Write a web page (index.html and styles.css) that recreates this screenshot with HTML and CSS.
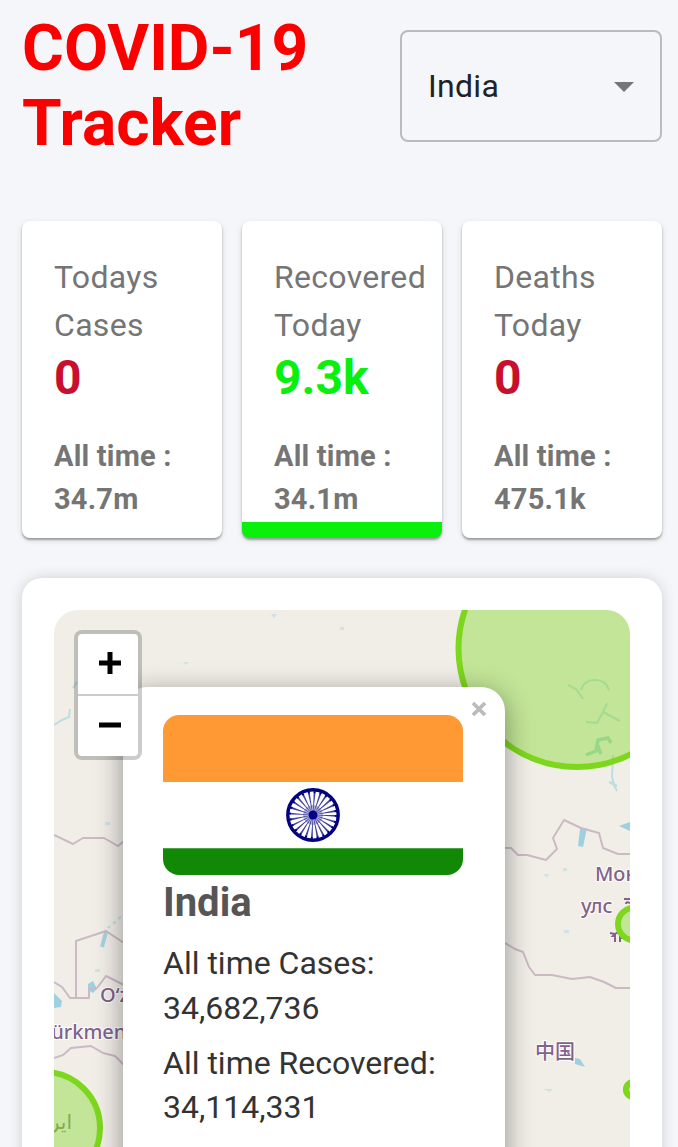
FILE: index.html
```html
<!DOCTYPE html>
<html lang="en">
<head>
<meta charset="utf-8">
<title>COVID-19 Tracker</title>
<link rel="stylesheet" href="styles.css">
</head>
<body>
<main class="app">
  <header class="header">
    <h1 class="title">COVID-19 Tracker</h1>
    <div class="select">
      <span>India</span>
      <svg class="arrow" width="20" height="10" viewBox="0 0 20 10"><path d="M0 0h20L10 10z"/></svg>
    </div>
  </header>

  <section class="stats">
    <article class="card">
      <p class="label">Todays Cases</p>
      <h2 class="value">0</h2>
      <p class="total">All time : 34.7m</p>
    </article>
    <article class="card card-selected">
      <p class="label">Recovered Today</p>
      <h2 class="value value-green">9.3k</h2>
      <p class="total">All time : 34.1m</p>
    </article>
    <article class="card">
      <p class="label">Deaths Today</p>
      <h2 class="value">0</h2>
      <p class="total">All time : 475.1k</p>
    </article>
  </section>

  <section class="map-card">
    <div class="map">
      <svg class="tiles" width="576" height="537" viewBox="54 610 576 537">
        <g class="water-line">
          <path d="M54 725l8-5 7-3 1-8M73 688l4-6"/>
          <path d="M568 685l8 4 7 10M581 690q3-10 14-10t14 10M607 703l-4 9 17 9M603 712l-6 11-11-1"/>
          <path class="lake" d="M586 755l10-4 2-11 10-2 3 5M597 744l4 10"/>
          <path d="M613 755l-1 22 3 11M612 781l5 10M609 782l8 4"/>
          <path class="river" d="M106 932l-4 15"/>
          <path class="dashed" d="M108 928l16-14"/>
        </g>
        <g class="water">
          <path d="M54 993l8 8-1 6-7 1zM88 984l5-3 4 8-4 4-5-3zM580 829l7-1-4 19-5-1zM619 826l11-4v9zM575 1058l5 1 5 8-10-3z"/>
          <path class="faint" d="M543 1089h10l-3 3zM564 930h5v3h-5zM271 614h6l-3 4zM183 662h6l-3 3zM340 627h4v3h-4zM543 874h6l-2 4zM563 868h4v3h-4zM95 969h5v3h-5zM105 822h5v3h-5z"/>
        </g>
        <g class="border">
          <path d="M54 835l19 9 10-6h21l14 8 6-5"/>
          <path d="M124 943l-18-12-30 10v57M54 982l8 5 8 11h19v-9l8-1 9-12 18 9"/>
          <path d="M54 1058l9-3 8-7 20-2 12 7 12 3 9 9"/>
          <path d="M505 848h6l7 7h9l19 5 11-11-4-11 11-18 17 8 18 5 4 15 15 6h12"/>
          <path d="M505 943l10 6 8 3 6 15 6 8h17l20 4 18-2 14 5 12 6h14"/>
        </g>
        <g class="place">
          <text x="100" y="1002">O‘z</text>
          <text x="41" y="1039">Türkmen</text>
          <text x="595" y="881">Мон</text>
          <text x="581" y="913">улс</text>
          <text class="cjk" x="535" y="1059">中国</text>
          <path d="M624 899h6M626 904q0-3 4-1M610 933l5 1-2 2 1 0M615 942v-8q4-3 5 0v8M620 938h6v-3"/>
        </g>
        <text class="place-ar" x="72" y="1129" text-anchor="end">ایر</text>
        <g class="circle">
          <circle cx="577" cy="648.5" r="118.5"/>
          <circle cx="44" cy="1128" r="56"/>
          <circle cx="634.5" cy="924" r="16.5"/>
          <circle cx="633.5" cy="1089.500" r="7.600"/>
        </g>
      </svg>

      <div class="popup">
        <svg class="close" width="16" height="16" viewBox="0 0 16 16"><path d="M2 2l12 12M14 2L2 14"/></svg>
        <svg class="flag" width="300" height="160" viewBox="0 0 300 160">
          <path fill="#f93" d="M0 0h300v67H0z"/>
          <path fill="#fff" d="M0 67h300v66H0z"/>
          <path fill="#128807" d="M0 133.300h300V160H0z"/>
          <g transform="translate(150 100)">
            <circle class="wheel" r="25.200"/>
            <circle class="spokes" r="12"/>
            <circle class="hub" r="6"/>
            <circle class="dots" r="23"/>
            <circle fill="#008" r="4.500"/>
          </g>
        </svg>
        <h3 class="country">India</h3>
        <p class="detail">All time Cases: 34,682,736</p>
        <p class="detail">All time Recovered: 34,114,331</p>
      </div>

      <div class="zoom">
        <span class="zoom-button"><svg width="22" height="22" viewBox="0 0 22 22"><path d="M0 11h22M11 0v22"/></svg></span>
        <span class="zoom-button"><svg width="22" height="22" viewBox="0 0 22 22"><path d="M0 11h22"/></svg></span>
      </div>
    </div>
  </section>
</main>
</body>
</html>
```
FILE: styles.css
```css
* { box-sizing: border-box; margin: 0; }

body {
  background: #f5f6fa;
  font-family: Roboto, "Liberation Sans", sans-serif;
  overflow: hidden;
}

.app {
  height: 1147px;
  padding: 11px 16px 0 22px;
  overflow: hidden;
}

.header {
  display: flex;
  justify-content: space-between;
  height: 210px;
}

.title {
  width: 320px;
  color: #fc0000;
  font-size: 64px;
  line-height: 75px;
}

.select {
  display: flex;
  align-items: center;
  justify-content: space-between;
  width: 262px;
  height: 112px;
  margin-top: 19px;
  padding: 0 26px;
  border: 2px solid #babbbf;
  border-radius: 8px;
  color: #212226;
  font-size: 32px;
  letter-spacing: 0.3px;
}

.arrow { margin-top: 2px; fill: #757578; }

.stats {
  display: grid;
  grid-template-columns: repeat(3, 200px);
  gap: 20px;
}

.card {
  height: 317px;
  padding: 32px 0 0 32px;
  border-radius: 8px;
  background: #fff;
  box-shadow: 0 2px 2px rgba(0, 0, 0, .3), 0 2px 6px rgba(0, 0, 0, .12);
  color: #757575;
}

.card-selected { border-bottom: 16px solid #08f00c; }

.label {
  width: 152px;
  font-size: 32px;
  line-height: 48px;
  letter-spacing: 0.3px;
}

.value {
  color: #c8102e;
  font-size: 48px;
  line-height: 58px;
}

.value-green { color: #08f00c; }

.total {
  width: 130px;
  margin-top: 28px;
  font-size: 29px;
  font-weight: 700;
  line-height: 43px;
  letter-spacing: 0.2px;
}

.map-card {
  height: 640px;
  margin-top: 40px;
  padding: 32px;
  border-radius: 20px;
  background: #fff;
  box-shadow: 0 0 16px -2px rgba(0, 0, 0, .2);
}

.map {
  position: relative;
  height: 576px;
  border-radius: 24px;
  background: #f1eee8;
  overflow: hidden;
}

.tiles { display: block; }
.water { fill: #9fd0df; }
.faint { opacity: .4; }
.water-line { fill: none; stroke: #add8df; stroke-width: 2; opacity: .75; }
.lake { stroke: #8fd0c4; stroke-width: 3.5; }
.river { stroke: #8ccbe0; stroke-width: 4; }
.dashed { stroke-dasharray: 3 4; }
.border { fill: none; stroke: #cbb9c5; stroke-width: 2; stroke-linejoin: round; }

.place {
  fill: #81628a;
  stroke: #fff;
  stroke-width: 2px;
  paint-order: stroke;
  font: 500 20px "Noto Sans", "Noto Sans CJK SC", sans-serif;
}

.place path { fill: none; stroke: #81628a; }
.cjk { font-family: "Noto Sans CJK SC", sans-serif; }
.place-ar { fill: #809171; font: 20px "DejaVu Sans", sans-serif; }

.circle {
  fill: #7dd71d;
  fill-opacity: .4;
  stroke: #7dd71d;
  stroke-width: 6;
}

.popup {
  position: absolute;
  top: 77px;
  left: 69px;
  width: 382px;
  height: 560px;
  padding: 28px 40px;
  border-radius: 24px;
  background: #fff;
  box-shadow: 0 6px 28px rgba(0, 0, 0, .4);
  color: #333;
}

.close {
  position: absolute;
  top: 14px;
  right: 18px;
  fill: none;
  stroke: #bbb;
  stroke-width: 3.8;
}

.flag { display: block; border-radius: 16px; }
.wheel { fill: #fff; stroke: #000080; stroke-width: 3.4; }
.spokes { fill: none; stroke: #000080; stroke-width: 22; stroke-dasharray: 1 2.1416; opacity: .75; }
.hub { fill: none; stroke: #000080; stroke-width: 8; opacity: .3; }
.dots { fill: none; stroke: #000080; stroke-width: 2; stroke-dasharray: 2 4.021; }

.country {
  margin-bottom: 10px;
  color: #555;
  font-size: 40px;
  line-height: 56px;
}

.detail {
  width: 290px;
  margin-bottom: 10.5px;
  font-size: 32px;
  line-height: 44.6px;
}

.zoom {
  position: absolute;
  top: 20px;
  left: 20px;
  display: grid;
  grid-template-rows: 62px 60px;
  width: 68px;
  border: 4px solid rgba(0, 0, 0, .2);
  border-radius: 8px;
  background: #fff;
  background-clip: padding-box;
}

.zoom-button {
  display: flex;
  align-items: center;
  justify-content: center;
  padding: 0 0 3px 3px;
}

.zoom-button:first-child { border-bottom: 2px solid #ccc; }
.zoom-button path { fill: none; stroke: #000; stroke-width: 5; }
```
